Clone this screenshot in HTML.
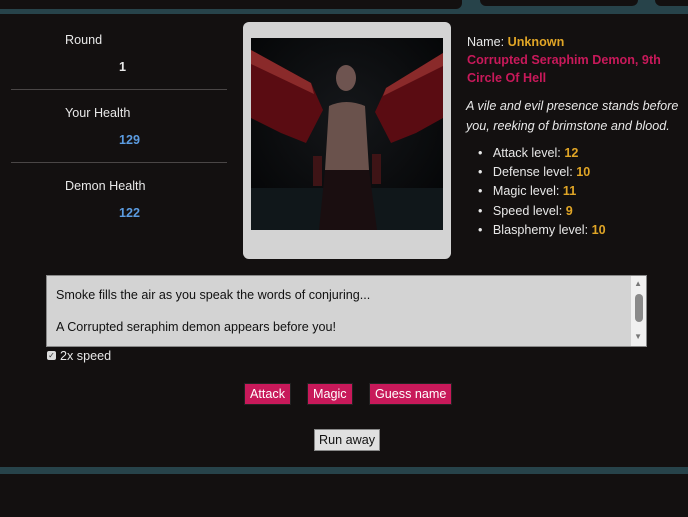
<!DOCTYPE html>
<html><head><meta charset="utf-8"><style>
*{margin:0;padding:0;box-sizing:border-box}
body{width:688px;height:517px;background:#131010;font-family:"Liberation Sans",sans-serif;font-size:12.6px;color:#e8e8e8;position:relative;overflow:hidden}
.a{position:absolute}
.teal{background:#27434a}
.lbl{left:65px}
.val{left:119px;font-weight:bold}
.hr{left:11px;width:216px;height:1px;background:#4a4646}
.g{color:#e0a526;font-weight:bold}
.btn{background:#c8195a;color:#fff;height:22px;line-height:21px;padding:0 5px;border:1px solid #222;top:383px}
</style></head><body>
<div class="a teal" style="left:0;top:0;width:688px;height:14px"></div>
<div class="a" style="left:0;top:0;width:462px;height:9px;background:#131010;border-radius:0 0 6px 0"></div>
<div class="a" style="left:480px;top:0;width:158px;height:6px;background:#131010;border-radius:0 0 6px 6px"></div>
<div class="a" style="left:655px;top:0;width:40px;height:6px;background:#131010;border-radius:0 0 0 6px"></div>

<div class="a lbl" style="top:33px">Round</div>
<div class="a val" style="top:60px">1</div>
<div class="a hr" style="top:89px"></div>
<div class="a lbl" style="top:106px">Your Health</div>
<div class="a val" style="top:133px;color:#5b9be0">129</div>
<div class="a hr" style="top:162px"></div>
<div class="a lbl" style="top:179px">Demon Health</div>
<div class="a val" style="top:206px;color:#5b9be0">122</div>

<div class="a" style="left:243px;top:22px;width:208px;height:237px;background:#d3d3d3;border-radius:6px"></div>
<svg class="a" style="left:251px;top:38px" width="192" height="192" viewBox="0 0 192 192">
<defs><radialGradient id="bg" cx="0.5" cy="0.4" r="0.7"><stop offset="0" stop-color="#15171a"/><stop offset="1" stop-color="#040506"/></radialGradient></defs>
<rect width="192" height="192" fill="url(#bg)"/>
<rect y="150" width="192" height="42" fill="#10171a"/>
<path d="M0 12 L60 45 L72 72 L55 105 L30 95 L0 80Z" fill="#5a0c12"/>
<path d="M192 15 L135 50 L124 74 L140 105 L165 95 L192 80Z" fill="#5a0c12"/>
<path d="M0 12 L60 45 L63 56 L0 26Z" fill="#8a2a2a"/>
<path d="M192 15 L135 50 L132 58 L192 28Z" fill="#8a2a2a"/>
<ellipse cx="95" cy="40" rx="10" ry="13" fill="#6e5450"/>
<path d="M78 68 Q95 60 114 68 L118 132 L74 132Z" fill="#6a524c"/>
<path d="M74 132 L118 132 L126 192 L68 192Z" fill="#1a0e10"/>
<rect x="62" y="118" width="9" height="30" fill="#3e1416"/>
<rect x="121" y="116" width="9" height="30" fill="#3e1416"/>
</svg>

<div class="a" style="left:467px;top:33px;line-height:18px;width:215px">Name: <span class="g">Unknown</span><br><span style="color:#c8195a;font-weight:bold">Corrupted Seraphim Demon, 9th<br>Circle Of Hell</span></div>
<div class="a" style="left:466px;top:96px;line-height:20px;font-style:italic;width:222px">A vile and evil presence stands before you, reeking of brimstone and blood.</div>
<div class="a" style="left:478px;top:144px;line-height:19.2px">
<div>•&nbsp;&nbsp;&nbsp;Attack level: <span class="g">12</span></div>
<div>•&nbsp;&nbsp;&nbsp;Defense level: <span class="g">10</span></div>
<div>•&nbsp;&nbsp;&nbsp;Magic level: <span class="g">11</span></div>
<div>•&nbsp;&nbsp;&nbsp;Speed level: <span class="g">9</span></div>
<div>•&nbsp;&nbsp;&nbsp;Blasphemy level: <span class="g">10</span></div>
</div>

<div class="a" style="left:46px;top:275px;width:601px;height:72px;background:#d3d3d3;border:1px solid #888;color:#111">
<div class="a" style="left:9px;top:12px">Smoke fills the air as you speak the words of conjuring...</div>
<div class="a" style="left:9px;top:44px">A Corrupted seraphim demon appears before you!</div>
<div class="a" style="right:0;top:0;width:15px;height:70px;background:#f0f0f0"></div>
<div class="a" style="right:4px;top:3px;font-size:8px;color:#777">▲</div>
<div class="a" style="right:3px;top:18px;width:8px;height:28px;background:#8a8a8a;border-radius:4px"></div>
<div class="a" style="right:4px;top:56px;font-size:8px;color:#777">▼</div>
</div>
<div class="a" style="left:47px;top:351px;width:9px;height:9px;background:#ddd;border-radius:2px;color:#333;font-size:8px;line-height:9px;text-align:center">✓</div>
<div class="a" style="left:60px;top:349px">2x speed</div>

<div class="a btn" style="left:244px">Attack</div>
<div class="a btn" style="left:307px">Magic</div>
<div class="a btn" style="left:369px">Guess name</div>
<div class="a" style="left:314px;top:429px;height:22px;line-height:20px;padding:0 4px;background:#e0e0e0;color:#111;border:1px solid #888">Run away</div>

<div class="a teal" style="left:0;top:467px;width:688px;height:7px"></div>
</body></html>
